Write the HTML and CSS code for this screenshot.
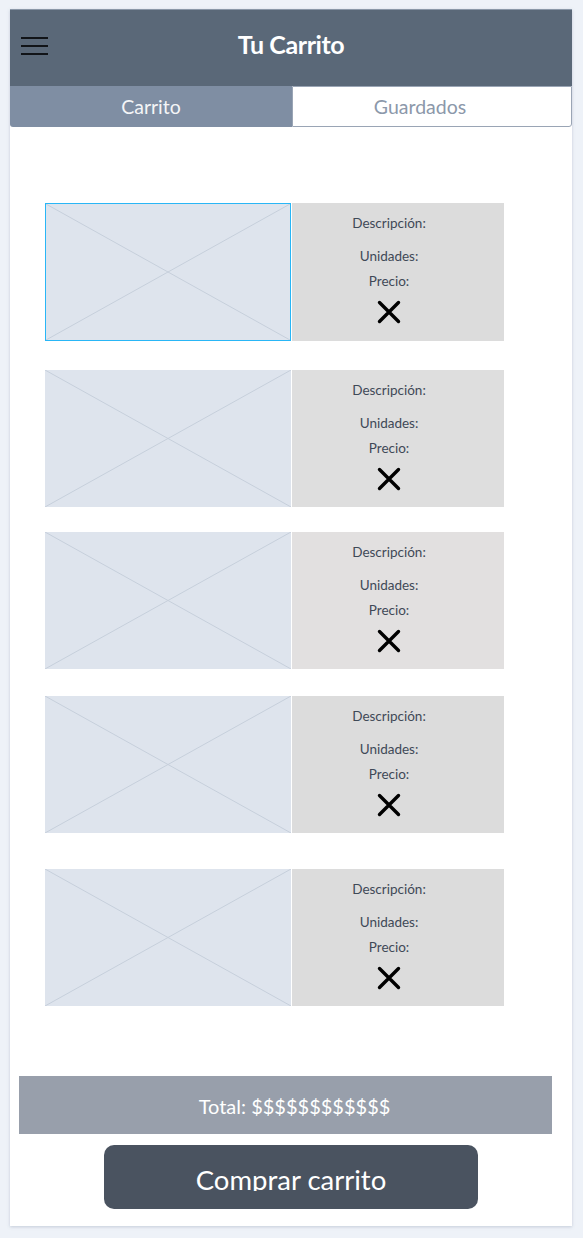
FILE: index.html
```html
<!DOCTYPE html>
<html lang="es">
<head>
<meta charset="utf-8">
<title>Tu Carrito</title>
<link rel="stylesheet" href="styles.css">
</head>
<body>
<div class="card">
  <header class="header">
    <svg class="burger" width="27" height="22" viewBox="0 0 27 22"><rect x="0" y="2" width="27" height="2"/><rect x="0" y="10" width="27" height="2"/><rect x="0" y="18" width="27" height="2"/></svg>
    <h1 class="title">Tu Carrito</h1>
  </header>
  <nav class="tabs">
    <div class="tab tab-active">Carrito</div>
    <div class="tab tab-idle">Guardados</div>
  </nav>
  <main class="items">
    <div class="item item-1">
      <div class="ph ph-selected"><svg viewBox="0 0 100 100" preserveAspectRatio="none"><line x1="0" y1="0" x2="100" y2="100" vector-effect="non-scaling-stroke"/><line x1="100" y1="0" x2="0" y2="100" vector-effect="non-scaling-stroke"/></svg></div>
      <div class="info"><span class="desc">Descripción:</span><span class="units">Unidades:</span><span class="price">Precio:</span><svg class="x" width="24" height="24" viewBox="0 0 24 24"><path d="M2.5 2.5 L21.5 21.5 M21.5 2.5 L2.5 21.5"/></svg></div>
    </div>
    <div class="item item-2">
      <div class="ph"><svg viewBox="0 0 100 100" preserveAspectRatio="none"><line x1="0" y1="0" x2="100" y2="100" vector-effect="non-scaling-stroke"/><line x1="100" y1="0" x2="0" y2="100" vector-effect="non-scaling-stroke"/></svg></div>
      <div class="info info-b"><span class="desc">Descripción:</span><span class="units">Unidades:</span><span class="price">Precio:</span><svg class="x" width="24" height="24" viewBox="0 0 24 24"><path d="M2.5 2.5 L21.5 21.5 M21.5 2.5 L2.5 21.5"/></svg></div>
    </div>
    <div class="item item-3">
      <div class="ph"><svg viewBox="0 0 100 100" preserveAspectRatio="none"><line x1="0" y1="0" x2="100" y2="100" vector-effect="non-scaling-stroke"/><line x1="100" y1="0" x2="0" y2="100" vector-effect="non-scaling-stroke"/></svg></div>
      <div class="info info-c"><span class="desc">Descripción:</span><span class="units">Unidades:</span><span class="price">Precio:</span><svg class="x" width="24" height="24" viewBox="0 0 24 24"><path d="M2.5 2.5 L21.5 21.5 M21.5 2.5 L2.5 21.5"/></svg></div>
    </div>
    <div class="item item-4">
      <div class="ph"><svg viewBox="0 0 100 100" preserveAspectRatio="none"><line x1="0" y1="0" x2="100" y2="100" vector-effect="non-scaling-stroke"/><line x1="100" y1="0" x2="0" y2="100" vector-effect="non-scaling-stroke"/></svg></div>
      <div class="info"><span class="desc">Descripción:</span><span class="units">Unidades:</span><span class="price">Precio:</span><svg class="x" width="24" height="24" viewBox="0 0 24 24"><path d="M2.5 2.5 L21.5 21.5 M21.5 2.5 L2.5 21.5"/></svg></div>
    </div>
    <div class="item item-5">
      <div class="ph"><svg viewBox="0 0 100 100" preserveAspectRatio="none"><line x1="0" y1="0" x2="100" y2="100" vector-effect="non-scaling-stroke"/><line x1="100" y1="0" x2="0" y2="100" vector-effect="non-scaling-stroke"/></svg></div>
      <div class="info"><span class="desc">Descripción:</span><span class="units">Unidades:</span><span class="price">Precio:</span><svg class="x" width="24" height="24" viewBox="0 0 24 24"><path d="M2.5 2.5 L21.5 21.5 M21.5 2.5 L2.5 21.5"/></svg></div>
    </div>
  </main>
  <div class="total">Total: $$$$$$$$$$$$</div>
  <button class="buy"><span class="buy-label">Comprar carrito</span></button>
</div>
</body>
</html>
```

FILE: styles.css
```css
* { box-sizing: border-box; }
html, body { margin: 0; padding: 0; }
body {
  background: #eef2f8;
  font-family: Lato, "Open Sans", sans-serif;
  padding: 9px 0 0 10px;
  height: 1238px;
  overflow: hidden;
}
.card {
  width: 562px;
  background: #ffffff;
  box-shadow: 0 1px 3px rgba(120, 135, 160, 0.35);
  padding-bottom: 17px;
}
.header {
  height: 77px;
  background: #5a6878;
  border-top: 1px solid #8b98a8;
  display: flex;
  align-items: center;
  justify-content: center;
  position: relative;
}
.burger {
  position: absolute;
  left: 11px;
  top: 25px;
  fill: #111418;
}
.title {
  margin: 0;
  color: #ffffff;
  font-size: 25px;
  font-weight: 700;
  letter-spacing: -0.4px;
  position: relative;
  top: -4px;
}
.tabs {
  display: flex;
  height: 41px;
}
.tab {
  flex: 0 0 auto;
  display: flex;
  align-items: center;
  justify-content: center;
  font-size: 19.5px;
}
.tab-active {
  width: 282px;
  background: #7f8ea3;
  color: #f4f5f7;
  border-radius: 0 0 0 3px;
}
.tab-idle {
  width: 280px;
  background: #ffffff;
  color: #8c98aa;
  border: 1px solid #9aa5b5;
  border-radius: 0 0 3px 0;
  padding-right: 24px;
}
.items {
  padding: 76px 0 0 35px;
}
.item {
  display: flex;
  gap: 1px;
  height: 138px;
}
.item-2 { margin-top: 29px; height: 137px; }
.item-3 { margin-top: 25px; height: 137px; }
.item-4 { margin-top: 27px; height: 137px; }
.item-5 { margin-top: 36px; height: 137px; }
.ph {
  width: 246px;
  background: #dee4ed;
}
.ph svg {
  display: block;
  width: 100%;
  height: 100%;
}
.ph line {
  stroke: #c6cfdb;
  stroke-width: 1;
}
.ph-selected {
  border: 1px solid #29b6f6;
}
.info {
  width: 212px;
  background: #dcdcdc;
  display: flex;
  flex-direction: column;
  align-items: center;
  padding: 12px 18px 0 0;
  color: #3f4957;
  font-size: 13.5px;
  line-height: 16px;
}
.info-b { background: #dedede; }
.info-c { background: #e2e0e0; }
.units { margin-top: 17px; }
.price { margin-top: 9px; }
.x {
  margin-top: 11px;
  fill: none;
  stroke: #000000;
  stroke-width: 3.4;
  stroke-linecap: round;
}
.total {
  margin: 70px 0 0 9px;
  width: 533px;
  height: 58px;
  background: #989fab;
  color: #ffffff;
  font-size: 20px;
  display: flex;
  align-items: center;
  justify-content: center;
  padding: 2px 0 0 18px;
}
.buy {
  display: flex;
  align-items: flex-start;
  justify-content: center;
  margin: 11px 0 0 94px;
  width: 374px;
  height: 64px;
  background: #4a5360;
  border: none;
  border-radius: 10px;
  padding: 19px 0 0 0;
  font-family: Lato, "Open Sans", sans-serif;
  cursor: pointer;
}
.buy-label {
  display: block;
  color: #ffffff;
  font-size: 27.5px;
  line-height: 32px;
  height: 27px;
  overflow: hidden;
}
```
